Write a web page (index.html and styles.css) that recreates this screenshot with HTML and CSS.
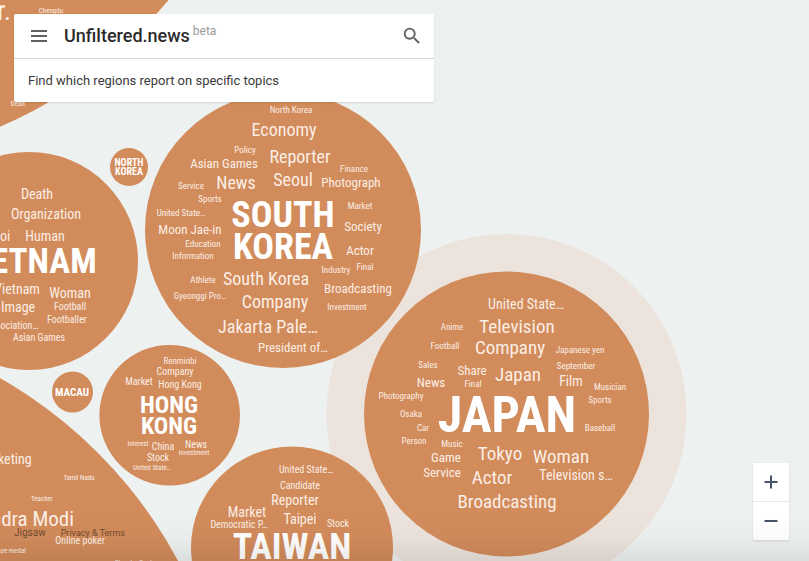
FILE: index.html
```html
<!DOCTYPE html>
<html lang="en">
<head>
<meta charset="utf-8">
<title>Unfiltered.news</title>
<link rel="stylesheet" href="styles.css">
</head>
<body>
<svg class="map" role="img" aria-label="Topics by region">
  <circle class="halo" cx="506.5" cy="414" r="180"/>
  <g class="bubbles">
    <circle cx="-173" cy="-279" r="441"/>
    <circle cx="-229.5" cy="779.5" r="462.5"/>
    <circle cx="29" cy="261" r="109"/>
    <circle cx="129" cy="167" r="19"/>
    <circle cx="72.5" cy="392" r="20.5"/>
    <circle cx="283" cy="230" r="138"/>
    <circle cx="169.7" cy="415.2" r="70.3"/>
    <circle cx="292" cy="547.5" r="101"/>
    <circle cx="506.5" cy="414" r="142.5"/>
  </g>
  <g class="topics">
    <text class="s28" x="4" y="20">r.</text>
    <text class="s7" x="51" y="13">Chengdu</text>
    <text class="s7" x="18" y="106">Dealt</text>

    <text class="s14" x="37" y="199">Death</text>
    <text class="s14" x="46" y="219">Organization</text>
    <text class="s14" x="-6" y="241">Hanoi</text>
    <text class="s14" x="45" y="241">Human</text>
    <text class="s14" x="17" y="294">Vietnam</text>
    <text class="s14" x="70" y="298">Woman</text>
    <text class="s14" x="18" y="312">Image</text>
    <text class="s10" x="70" y="310">Football</text>
    <text class="s10" x="67" y="323">Footballer</text>
    <text class="s10" x="12" y="329">Association…</text>
    <text class="s10" x="39" y="341">Asian Games</text>

    <text class="s9" x="291" y="113">North Korea</text>
    <text class="s18" x="284" y="136">Economy</text>
    <text class="s9" x="245" y="153">Policy</text>
    <text class="s18" x="300" y="163">Reporter</text>
    <text class="s13" x="224" y="168">Asian Games</text>
    <text class="s9" x="354" y="172">Finance</text>
    <text class="s18" x="236" y="189">News</text>
    <text class="s18" x="293" y="186">Seoul</text>
    <text class="s13" x="351" y="187">Photograph</text>
    <text class="s9" x="191" y="189">Service</text>
    <text class="s9" x="210" y="202">Sports</text>
    <text class="s9" x="181" y="216">United State…</text>
    <text class="s9" x="360" y="209">Market</text>
    <text class="s13" x="363" y="231">Society</text>
    <text class="s13" x="190" y="234">Moon Jae-in</text>
    <text class="s9" x="203" y="247">Education</text>
    <text class="s9" x="193" y="259">Information</text>
    <text class="s13" x="360" y="255">Actor</text>
    <text class="s9" x="336" y="273">Industry</text>
    <text class="s9" x="365" y="270">Final</text>
    <text class="s9" x="203" y="283">Athlete</text>
    <text class="s18" x="266" y="285">South Korea</text>
    <text class="s13" x="358" y="293">Broadcasting</text>
    <text class="s9" x="200" y="299">Gyeonggi Pro…</text>
    <text class="s18" x="275" y="308">Company</text>
    <text class="s9" x="347" y="310">Investment</text>
    <text class="s18" x="268" y="333">Jakarta Pale…</text>
    <text class="s13" x="293" y="352">President of…</text>

    <text class="s9" x="180" y="364">Renminbi</text>
    <text class="s10" x="175" y="375">Company</text>
    <text class="s10" x="139" y="385">Market</text>
    <text class="s10" x="180" y="388">Hong Kong</text>
    <text class="s7" x="138" y="446">Interest</text>
    <text class="s10" x="163" y="450">China</text>
    <text class="s10" x="196" y="448">News</text>
    <text class="s7" x="194" y="455">Investment</text>
    <text class="s10" x="158" y="461">Stock</text>
    <text class="s7" x="152" y="470">United State…</text>

    <text class="s14" x="4" y="464">Marketing</text>
    <text class="s7" x="79" y="480">Tamil Nadu</text>
    <text class="s7" x="42" y="501">Teacher</text>
    <text class="s21" x="13" y="526">Narendra Modi</text>
    <text class="s10" x="80" y="544">Online poker</text>
    <text class="s7" x="7" y="553">Bronze medal</text>
    <text class="s7" x="135" y="565">Chandra Gupta</text>

    <text class="s10" x="306" y="473">United State…</text>
    <text class="s10" x="300" y="489">Candidate</text>
    <text class="s14" x="295" y="505">Reporter</text>
    <text class="s14" x="247" y="517">Market</text>
    <text class="s10" x="239" y="528">Democratic P…</text>
    <text class="s14" x="300" y="524">Taipei</text>
    <text class="s10" x="338" y="527">Stock</text>

    <text class="s14" x="526" y="309">United State…</text>
    <text class="s9" x="452" y="330">Anime</text>
    <text class="s19" x="517" y="333">Television</text>
    <text class="s9" x="445" y="349">Football</text>
    <text class="s19" x="510" y="354">Company</text>
    <text class="s9" x="580" y="353">Japanese yen</text>
    <text class="s9" x="428" y="368">Sales</text>
    <text class="s13" x="472" y="375">Share</text>
    <text class="s19" x="518" y="381">Japan</text>
    <text class="s9" x="576" y="369">September</text>
    <text class="s13" x="431" y="387">News</text>
    <text class="s9" x="473" y="387">Final</text>
    <text class="s14" x="571" y="386">Film</text>
    <text class="s9" x="610" y="390">Musician</text>
    <text class="s9" x="401" y="399">Photography</text>
    <text class="s9" x="600" y="403">Sports</text>
    <text class="s9" x="411" y="417">Osaka</text>
    <text class="s9" x="423" y="431">Car</text>
    <text class="s9" x="600" y="431">Baseball</text>
    <text class="s9" x="414" y="444">Person</text>
    <text class="s9" x="452" y="447">Music</text>
    <text class="s13" x="446" y="462">Game</text>
    <text class="s19" x="500" y="460">Tokyo</text>
    <text class="s19" x="561" y="463">Woman</text>
    <text class="s13" x="442" y="477">Service</text>
    <text class="s19" x="492" y="484">Actor</text>
    <text class="s14" x="576" y="480">Television s…</text>
    <text class="s19" x="507" y="508">Broadcasting</text>
  </g>
  <g class="regions">
    <text class="s35" x="29" y="273">VIETNAM</text>
    <text class="s10" x="129" y="166">NORTH</text>
    <text class="s10" x="129" y="175">KOREA</text>
    <text class="s11" x="72" y="396">MACAU</text>
    <text class="s36" x="283" y="227">SOUTH</text>
    <text class="s36" x="283" y="259">KOREA</text>
    <text class="s24" x="169" y="413">HONG</text>
    <text class="s24" x="169" y="434">KONG</text>
    <text class="s36" x="292" y="559">TAIWAN</text>
    <text class="s50" x="507" y="432">JAPAN</text>
  </g>
</svg>

<header class="panel">
  <div class="bar">
    <button class="icon-button" type="button" aria-label="Menu">
      <svg width="24" height="24" viewBox="0 0 24 24"><path d="M4 8V6h16v2zM4 13v-2h16v2zM4 18v-2h16v2z"/></svg>
    </button>
    <h1 class="brand">Unfiltered.news<sup>beta</sup></h1>
    <button class="icon-button" type="button" aria-label="Search">
      <svg width="22" height="22" viewBox="0 0 24 24"><path d="M15.500 14h-.79l-.28-.27A6.471 6.471 0 0 0 16 9.500 6.500 6.500 0 1 0 9.500 16c1.610 0 3.090-.59 4.230-1.570l.27.28v.79l5 4.990L20.490 19l-4.990-5zm-6 0C7.010 14 5 11.990 5 9.500S7.010 5 9.500 5 14 7.010 14 9.500 11.990 14 9.500 14z"/></svg>
    </button>
  </div>
  <p class="hint">Find which regions report on specific topics</p>
</header>

<div class="zoom">
  <button type="button" aria-label="Zoom in"><svg width="14" height="14" viewBox="0 0 14 14"><path d="M7 .5v13M.5 7h13"/></svg></button>
  <button type="button" aria-label="Zoom out"><svg width="14" height="14" viewBox="0 0 14 14"><path d="M.5 7h13"/></svg></button>
</div>

<footer class="footer">
  <nav class="links">
    <a class="jigsaw" href="#">Jigsaw</a>
    <a href="#">Privacy &amp; Terms</a>
  </nav>
</footer>
</body>
</html>
```
FILE: styles.css
```css
* { box-sizing: border-box; }

body {
  margin: 0;
  min-height: 100vh;
  overflow: hidden;
  background: #edf1f0;
  font-family: Roboto, "Liberation Sans", sans-serif;
}

.map {
  position: absolute;
  inset: 0;
  width: 100%;
  height: 100%;
  font-family: "Roboto Condensed", "Liberation Sans Narrow", Roboto, sans-serif;
  text-anchor: middle;
}
.halo { fill: #ebe3dc; }
.bubbles { fill: #d28b5b; }
.topics { fill: #fbeee5; }
.regions { fill: #fff; font-weight: 700; }

.s7 { font-size: 7px; }
.s9 { font-size: 9px; }
.s10 { font-size: 10px; }
.s11 { font-size: 11px; }
.s13 { font-size: 13px; }
.s14 { font-size: 14px; }
.s18 { font-size: 18px; }
.s19 { font-size: 19px; }
.s21 { font-size: 21px; }
.s24 { font-size: 24px; }
.s28 { font-size: 28px; }
.s35 { font-size: 35px; }
.s36 { font-size: 36px; }
.s50 { font-size: 50px; }

.panel {
  position: relative;
  width: calc(100% - 28px);
  max-width: 420px;
  margin: 14px;
  background: #fff;
  border-radius: 2px;
  box-shadow: 0 1px 2px rgba(0, 0, 0, .12);
}
.bar {
  display: flex;
  align-items: center;
  height: 45px;
  padding: 0 11px 0 13px;
  border-bottom: 1px solid #d8d8d8;
}
.icon-button {
  display: flex;
  padding: 0;
  border: 0;
  background: none;
  fill: #616161;
  cursor: pointer;
}
.brand {
  flex: 1;
  margin: 0 0 0 13px;
  font-size: 18px;
  font-weight: 500;
  line-height: 24px;
  color: #2b2b2b;
}
.brand sup {
  margin-left: 3px;
  font-size: 12px;
  line-height: 0;
  font-weight: 400;
  color: #999;
}
.hint {
  margin: 0;
  padding: 12px 14px;
  font-size: 13px;
  line-height: 19px;
  color: #3a3a3a;
}

.footer {
  position: absolute;
  inset: auto 0 0;
  padding: 10px 14px 20px;
  background: linear-gradient(rgba(0, 0, 0, 0), rgba(0, 0, 0, .02) 50%, rgba(0, 0, 0, .08));
  pointer-events: none;
}
.links {
  display: flex;
  align-items: center;
  gap: 15px;
  font-size: 9px;
  line-height: 16px;
}
.links a {
  color: rgba(0, 0, 0, .5);
  text-decoration: none;
  pointer-events: auto;
}
.links .jigsaw { font-size: 10px; }

.zoom {
  position: absolute;
  right: 20px;
  bottom: 21px;
  width: 36px;
  background: #fff;
  box-shadow: 0 1px 2px rgba(0, 0, 0, .12);
}
.zoom button {
  display: flex;
  align-items: center;
  justify-content: center;
  width: 100%;
  height: 38px;
  padding: 0;
  border: 0;
  background: none;
  cursor: pointer;
}
.zoom button + button {
  height: 39px;
  border-top: 1px solid #e6e6e6;
}
.zoom path { fill: none; stroke: #465569; stroke-width: 2; }
```
